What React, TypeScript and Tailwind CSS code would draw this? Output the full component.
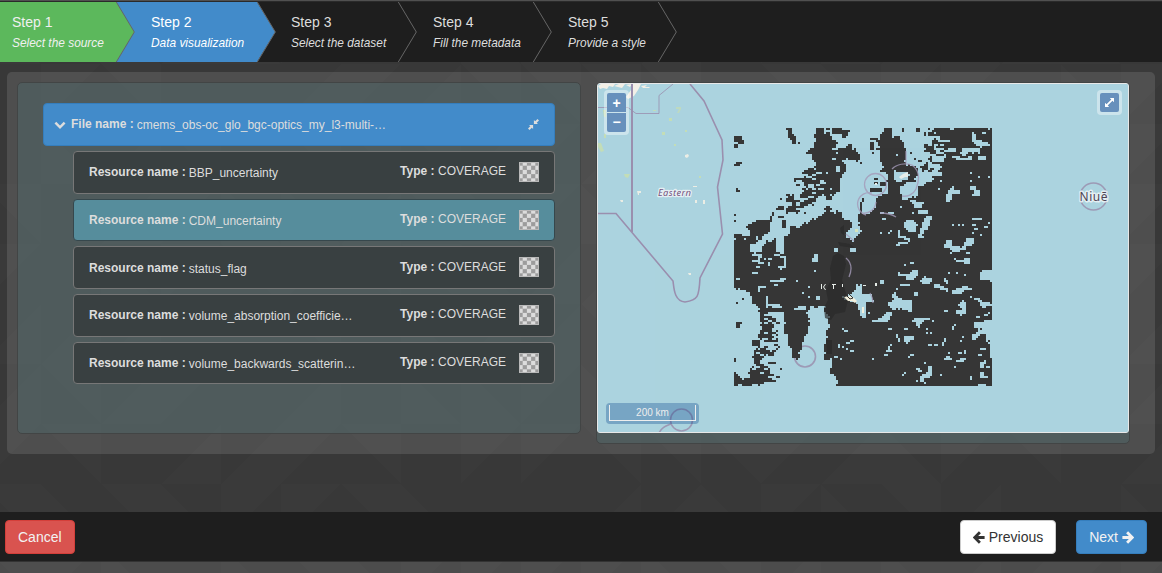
import React from "react";

/* ---------- raster layer ---------- */

type Op = { k: "d" | "l"; p: number[]; n?: number };
const D = (...p: number[]): Op => ({ k: "d", p });
const L = (...p: number[]): Op => ({ k: "l", p });
const box = (x: number, y: number, w: number, h: number) => [x, y, x + w, y, x + w, y + h, x, y + h];
const boxes = (k: "d" | "l", a: number[][]): Op[] => a.map((b) => ({ k, p: box(b[0], b[1], b[2], b[3]) }));
const noise = (k: "d" | "l", n: number, ...p: number[]): Op => ({ k, p, n });

const quadNW: Op[] = [
  D(171, 24, 189, 24, 189, 42, 195, 48, 201, 70, 189, 70, 189, 60, 177, 55, 177, 32, 171, 30),
  D(258, 24, 285, 24, 285, 42, 303, 48, 306, 60, 327, 62, 318, 74, 306, 92, 342, 82, 360, 72, 366, 84, 384, 98, 390, 110, 384, 124, 372, 118, 354, 114, 336, 122, 345, 136, 348, 160, 334, 162, 330, 180, 326, 212, 312, 222, 296, 222, 306, 234, 300, 240, 285, 228, 260, 228, 262, 252, 236, 256, 212, 262, 212, 278, 172, 278, 168, 262, 184, 256, 186, 246, 168, 246, 168, 222, 194, 222, 194, 240, 232, 240, 212, 232, 214, 210, 240, 206, 212, 196, 214, 180, 190, 182, 190, 174, 218, 174, 220, 156, 240, 144, 255, 146, 258, 132, 246, 118, 246, 108, 228, 98, 234, 90, 252, 82, 252, 42, 258, 40),
  D(309, 24, 335, 24, 335, 30, 360, 30, 356, 42, 348, 56, 335, 50, 335, 42, 309, 40),
  D(162, 348, 180, 342, 180, 324, 190, 318, 212, 324, 220, 312, 244, 300, 268, 290, 285, 276, 285, 264, 296, 254, 302, 254, 302, 276, 334, 276, 342, 300, 360, 300, 366, 318, 350, 336, 345, 350, 375, 366, 378, 348, 396, 336, 384, 318, 396, 300, 405, 300, 405, 405, 162, 405),
  D(398, 240, 406, 240, 406, 306, 384, 306, 384, 282, 392, 280, 390, 250),
  D(12, 342, 60, 348, 60, 336, 48, 318, 66, 308, 90, 300, 118, 300, 118, 336, 96, 348, 84, 360, 78, 372, 60, 372, 60, 398, 54, 406, 12, 406),
  D(104, 372, 132, 360, 138, 352, 138, 406, 92, 406, 96, 378),
  ...boxes("d", [[207, 66, 6, 6], [12, 48, 24, 20], [24, 60, 18, 12], [12, 70, 12, 12], [18, 126, 18, 6], [12, 130, 18, 8], [18, 204, 6, 6], [18, 208, 12, 8], [12, 282, 6, 6], [12, 300, 6, 6], [290, 24, 12, 6], [290, 36, 12, 8], [392, 126, 7, 6], [156, 300, 14, 24], [150, 234, 6, 6], [144, 260, 18, 8], [138, 264, 12, 6], [144, 288, 18, 6], [124, 276, 8, 14], [120, 288, 6, 18], [196, 190, 12, 8], [225, 276, 4, 6], [108, 360, 6, 8]]),
  ...boxes("l", [[318, 140, 12, 18], [270, 186, 16, 8], [264, 204, 18, 6], [270, 180, 12, 6], [258, 156, 18, 6], [230, 168, 14, 6], [248, 192, 6, 12], [246, 216, 10, 8], [298, 206, 6, 6], [240, 228, 10, 8], [316, 98, 6, 6], [290, 156, 6, 6], [80, 348, 20, 12], [312, 386, 10, 18], [360, 384, 20, 10], [372, 396, 24, 10], [330, 66, 12, 6], [306, 114, 14, 6], [42, 354, 6, 8], [12, 354, 6, 4]]),
  ...boxes("d", [[86, 350, 8, 8]]),
  noise("l", 0.12, 180, 160, 290, 160, 290, 275, 170, 275),
];

const quadNE: Op[] = [
  D(222, 24, 396, 24, 396, 406, -2, 406, -2, 282, 30, 282, 48, 264, 50, 234, 66, 225, 84, 222, 84, 192, 78, 162, 60, 150, 72, 138, 60, 120, 60, 90, 54, 66, 66, 42, 72, 36, 72, 24, 96, 24, 96, 54, 108, 48, 120, 58, 135, 72, 137, 90, 141, 108, 141, 120, 132, 126, 138, 134, 160, 134, 174, 150, 174, 168, 160, 184, 144, 190, 120, 204, 118, 216, 130, 240, 148, 234, 168, 228, 178, 222, 174, 204, 192, 190, 216, 186, 222, 168, 246, 162, 228, 150, 204, 156, 186, 150, 180, 138, 204, 126, 216, 108, 198, 96, 192, 78, 210, 66, 222, 54),
  ...boxes("d", [[33, 54, 24, 6], [33, 66, 12, 24], [48, 84, 12, 6], [39, 96, 6, 6], [166, 24, 14, 10], [124, 24, 10, 12], [192, 36, 6, 12], [204, 24, 6, 6], [204, 36, 18, 12], [153, 96, 6, 6], [165, 112, 6, 6], [177, 120, 10, 8], [3, 126, 6, 6], [40, 186, 14, 6], [32, 206, 32, 10], [60, 186, 20, 14], [40, 172, 12, 6], [0, 234, 12, 12]]),
  L(100, 158, 130, 156, 148, 160, 146, 176, 132, 180, 120, 186, 108, 184),
  L(120, 204, 144, 192, 166, 192, 162, 222, 148, 230, 132, 224, 118, 224),
  L(102, 150, 108, 150, 108, 182, 102, 184),
  L(240, 84, 288, 80, 288, 98, 258, 100, 254, 126, 236, 130, 246, 144, 234, 150, 216, 144, 204, 154, 204, 126, 216, 124, 216, 96, 240, 94),
  L(318, 82, 360, 84, 360, 100, 330, 96, 318, 106, 300, 104, 306, 86),
  L(338, 36, 350, 42, 350, 60, 380, 66, 390, 78, 360, 82, 336, 66),
  L(138, 300, 162, 300, 174, 312, 166, 336, 140, 332, 132, 318),
  L(192, 300, 204, 288, 216, 290, 210, 312, 204, 330, 192, 332, 186, 350, 174, 350, 180, 330),
  L(264, 216, 276, 198, 286, 198, 282, 210, 300, 210, 300, 222, 276, 222, 274, 240, 262, 252, 258, 234),
  L(330, 198, 350, 198, 350, 210, 362, 214, 362, 228, 338, 226, 342, 212, 330, 210),
  L(250, 376, 262, 360, 276, 362, 276, 378, 300, 378, 300, 396, 276, 396, 270, 386, 250, 384),
  L(318, 354, 342, 354, 344, 366, 336, 376, 318, 376, 318, 390, 300, 390, 312, 376),
  ...boxes("l", [[210, 48, 30, 6], [234, 60, 34, 6], [222, 72, 12, 16], [300, 112, 36, 6], [290, 106, 10, 12], [356, 108, 20, 10], [366, 36, 14, 6], [272, 24, 10, 6], [110, 102, 6, 6], [382, 168, 6, 8], [354, 168, 6, 6], [330, 154, 4, 8], [330, 180, 6, 4], [240, 180, 6, 6], [235, 204, 6, 6], [385, 24, 6, 6], [148, 240, 18, 8], [156, 246, 38, 6], [164, 250, 24, 14], [123, 258, 6, 6], [174, 270, 28, 10], [156, 276, 6, 6], [186, 270, 12, 12], [60, 276, 12, 6], [82, 276, 20, 6], [62, 336, 6, 6], [66, 292, 12, 6], [84, 338, 6, 4], [90, 330, 6, 6], [116, 330, 6, 24], [120, 348, 18, 6], [132, 354, 20, 6], [114, 366, 32, 6], [108, 372, 10, 6], [146, 360, 6, 6], [276, 312, 6, 6], [294, 312, 6, 6], [306, 312, 6, 6], [336, 294, 30, 6], [336, 312, 12, 6], [342, 324, 12, 6], [384, 306, 6, 6], [374, 318, 12, 6], [338, 336, 6, 6], [360, 342, 6, 6], [0, 312, 9, 12], [174, 348, 18, 6], [318, 354, 6, 24]]),
  noise("d", 0.18, 216, 80, 300, 80, 300, 150, 204, 150),
  noise("l", 0.08, 205, 50, 340, 50, 340, 120, 205, 120),
];

const quadSW: Op[] = [
  D(12, -2, 406, -2, 406, 98, 380, 98, 375, 120, 345, 132, 350, 144, 380, 150, 400, 186, 406, 200, 406, 405, 322, 405, 318, 372, 300, 366, 304, 328, 286, 330, 282, 280, 290, 262, 286, 240, 298, 225, 296, 192, 284, 182, 282, 165, 246, 165, 228, 180, 240, 200, 238, 220, 232, 240, 225, 255, 218, 280, 208, 296, 208, 320, 190, 324, 184, 290, 174, 282, 174, 258, 162, 240, 162, 180, 120, 180, 118, 192, 138, 200, 140, 210, 126, 214, 130, 240, 140, 240, 140, 252, 96, 262, 84, 300, 96, 318, 72, 330, 66, 318, 84, 300, 84, 262, 96, 225, 90, 190, 84, 165, 66, 150, 60, 126, 40, 115, 12, 108),
  D(84, 285, 120, 295, 100, 312, 96, 335, 120, 348, 126, 372, 132, 390, 108, 390, 84, 400, 12, 400, 12, 370, 24, 366, 30, 378, 60, 378, 60, 345, 80, 345, 66, 318),
  ...boxes("d", [[18, 148, 6, 6], [36, 140, 6, 6], [18, 208, 12, 18], [24, 208, 12, 6], [12, 320, 6, 10], [12, 358, 6, 6], [138, 372, 12, 6], [132, 276, 12, 8], [144, 282, 6, 6], [108, 264, 36, 6], [138, 210, 12, 6], [150, 348, 6, 6], [120, 300, 12, 12], [120, 366, 12, 6], [130, 386, 8, 6]]),
  ...boxes("l", [[65, 6, 12, 6], [82, 12, 8, 24], [66, 24, 18, 8], [90, 30, 12, 6], [78, 42, 12, 6], [90, 6, 6, 12], [132, 6, 18, 8], [150, 12, 20, 6], [160, 18, 6, 6], [102, 18, 6, 6], [112, 30, 6, 10], [66, 60, 20, 8], [144, 42, 22, 6], [150, 42, 8, 14], [120, 84, 44, 8], [150, 76, 20, 6], [82, 100, 24, 6], [82, 100, 8, 22], [132, 96, 12, 6], [160, 24, 6, 18], [18, 78, 14, 6], [108, 130, 6, 36], [112, 156, 36, 6], [126, 164, 30, 6], [150, 180, 12, 30], [246, 20, 18, 8], [254, 8, 12, 14], [252, 57, 6, 6], [216, 118, 6, 6], [234, 105, 6, 6], [196, 87, 6, 6], [260, 134, 10, 8], [234, 132, 6, 6], [206, 160, 20, 14], [194, 170, 12, 6], [336, 228, 6, 6], [342, 234, 12, 6], [360, 264, 12, 6], [348, 270, 10, 6], [348, 288, 6, 6], [360, 294, 12, 6], [324, 276, 6, 10], [336, 282, 6, 6], [314, 310, 8, 6], [330, 318, 6, 6], [396, 330, 10, 4], [378, 117, 12, 6], [300, 318, 6, 12]]),
  L(336, 132, 350, 138, 376, 126, 406, 124, 406, 198, 396, 196, 384, 168, 380, 150, 350, 146),
  noise("l", 0.24, 84, 170, 140, 180, 140, 285, 84, 310),
  noise("l", 0.2, 66, 300, 130, 300, 132, 380, 60, 380),
  noise("l", 0.12, 70, -2, 170, -2, 170, 45, 70, 45),
  noise("d", 0.18, 66, 250, 140, 240, 150, 350, 66, 350),
];

const quadSE: Op[] = [
  D(-2, -2, 396, -2, 396, 405, -2, 405),
  L(0, 124, 36, 124, 40, 150, 18, 150, 20, 196, 0, 200),
  L(96, 126, 108, 120, 114, 140, 156, 144, 158, 182, 144, 176, 120, 176, 114, 170, 100, 172, 84, 162, 88, 150, 102, 146),
  L(112, 62, 150, 66, 160, 54, 172, 52, 174, 70, 160, 84, 142, 86, 138, 74, 112, 68),
  L(180, 86, 196, 74, 216, 78, 218, 90, 204, 94, 190, 94),
  L(282, 18, 290, 24, 312, 24, 312, 16, 328, 20, 328, 38, 312, 38, 308, 30, 282, 26),
  L(358, 60, 386, 52, 398, 52, 398, 88, 362, 84),
  L(220, 100, 240, 96, 244, 104, 266, 108, 264, 120, 240, 110, 222, 110),
  L(274, 120, 290, 110, 312, 104, 336, 106, 336, 112, 314, 114, 300, 126, 286, 128, 276, 128),
  L(330, 134, 360, 138, 366, 148, 396, 154, 396, 160, 378, 160, 372, 172, 362, 164, 360, 150),
  L(306, 144, 316, 150, 318, 184, 306, 190, 288, 184, 288, 176, 304, 172, 294, 158),
  L(66, 196, 78, 182, 96, 182, 90, 198, 84, 210, 60, 208, 54, 196),
  L(160, 200, 180, 196, 202, 196, 216, 206, 192, 206, 180, 222, 174, 230, 168, 214, 158, 210),
  L(134, 250, 160, 250, 160, 262, 148, 266, 144, 276, 134, 272),
  L(346, 208, 398, 206, 398, 318, 388, 318, 390, 280, 378, 268, 378, 246, 354, 250, 350, 264, 334, 264, 334, 246, 350, 244, 354, 230, 338, 228),
  L(202, 346, 216, 342, 218, 364, 208, 380, 192, 380, 196, 396, 184, 390, 178, 372, 202, 360),
  ...boxes("l", [[153, 30, 12, 9], [135, 39, 6, 6], [268, 0, 6, 6], [318, 0, 12, 6], [264, 58, 8, 8], [255, 76, 6, 12], [260, 84, 6, 10], [288, 62, 6, 6], [312, 66, 6, 6], [60, 82, 12, 16], [118, 94, 30, 9], [110, 110, 6, 6], [162, 122, 12, 8], [252, 172, 14, 6], [348, 190, 10, 8], [372, 186, 12, 6], [382, 180, 6, 6], [26, 178, 6, 6], [38, 206, 20, 6], [84, 228, 12, 6], [130, 226, 12, 8], [108, 246, 8, 12], [116, 258, 6, 12], [196, 228, 6, 6], [196, 240, 6, 6], [210, 240, 6, 6], [216, 202, 6, 6], [204, 276, 12, 6], [222, 276, 14, 6], [248, 270, 6, 12], [255, 258, 6, 10], [274, 224, 10, 8], [280, 218, 8, 6], [300, 262, 6, 6], [306, 252, 6, 6], [90, 276, 6, 6], [84, 282, 6, 12], [78, 292, 16, 6], [72, 306, 10, 6], [38, 318, 6, 6], [142, 310, 10, 8], [148, 306, 12, 6], [260, 312, 12, 6], [254, 318, 22, 6], [264, 300, 6, 6], [290, 326, 22, 6], [300, 318, 16, 6], [296, 300, 10, 6], [310, 294, 6, 10], [282, 342, 6, 6], [242, 364, 6, 6], [192, 330, 6, 6], [168, 348, 12, 8], [172, 356, 12, 6], [128, 364, 6, 6], [166, 384, 8, 8], [210, 400, 14, 6], [360, 330, 12, 18], [372, 324, 6, 10], [360, 362, 12, 18], [370, 370, 16, 8], [330, 374, 6, 12], [352, 394, 28, 12], [378, 342, 12, 4], [360, 288, 16, 6], [354, 306, 14, 6], [132, 362, 6, 6]]),
  ...boxes("d", [[382, 400, 8, 5], [360, 226, 6, 8], [120, 170, 8, 10], [386, 262, 6, 6]]),
];

const quadrants: [number, number, Op[]][] = [
  [730, 120, quadNW],
  [860, 120, quadNE],
  [730, 252, quadSW],
  [860, 252, quadSE],
];

function inside(x: number, y: number, p: number[]) {
  let hit = false;
  for (let i = 0, j = p.length - 2; i < p.length; j = i, i += 2) {
    if (p[i + 1] > y !== p[j + 1] > y && x < ((p[j] - p[i]) * (y - p[i + 1])) / (p[j + 1] - p[i + 1]) + p[i]) hit = !hit;
  }
  return hit;
}

const rand = (x: number, y: number, s: number) => {
  let h = Math.imul(x + 101, 374761393) ^ Math.imul(y + 37, 668265263) ^ Math.imul(s + 11, 2147483629);
  h = Math.imul(h ^ (h >>> 13), 1274126177);
  h = Math.imul(h ^ (h >>> 15), 2246822519);
  return ((h ^ (h >>> 16)) >>> 0) / 4294967296;
};

function buildRaster() {
  let d = "";
  for (let y = 128; y < 387; y += 2) {
    let start = -1;
    for (let x = 734; x <= 992; x += 2) {
      let on = false;
      if (x < 992) {
        const [ox, oy, ops] = quadrants[(y >= 252 ? 2 : 0) + (x >= 862 ? 1 : 0)];
        const px = (x + 1 - ox) * 3;
        const py = (y + 1 - oy) * 3;
        const edge = y < 130 || y > 384 || x < 736 || x > 989;
        const jx = px + (edge ? 0 : (rand(x, y, 1) - 0.5) * 7);
        const jy = py + (edge ? 0 : (rand(x, y, 2) - 0.5) * 7);
        ops.forEach((o, i) => {
          if (o.n) {
            if (rand(x >> 2, y >> 1, i + 3) < o.n && inside(px, py, o.p)) on = o.k === "d";
          } else {
            const big = o.p.length > 30;
            if (inside(big ? jx : px, big ? jy : py, o.p)) on = o.k === "d";
          }
        });
      }
      if (on && start < 0) start = x;
      if (!on && start >= 0) {
        d += `M${start} ${y}H${x}V${Math.min(y + 2, 387)}H${start}Z`;
        start = -1;
      }
    }
  }
  return d;
}

const rasterPath = buildRaster();

function MapCanvas() {
  return (
    <svg className="block h-full w-full" viewBox="598 84 530 348" preserveAspectRatio="none">
      <rect x="598" y="84" width="530" height="348" fill="#abd3df" />
      <g fill="#f2efe6">
        <path d="M598 86l3-2h14l-2 3-4-1-2 3-4-1-3 1zM614 86l5-2h6l-3 4-4-1zM626 85l6-1-2 3zM633 84h8l-3 6-4 6-6 3-2-2 5-7zM641 86l6-1-2 2 5 0-1 1-6 0z" />
        <path d="M685 155l3-1 1 2-2 2-2-1zM637 191h4v2h-2v2h-1zM620 200h3v2h-2zM695 200h2v3h-2zM703 200h2v4h-2zM688 273h3v2h-2zM693 186h4v1h-4z" opacity=".9" />
      </g>
      <g fill="#c8dfb1" opacity=".85">
        <path d="M603 110h3v7h-2zM598 143h3l3 8-3 1-3-5zM604 134h2v4h-2zM662 132h3v3h-3zM669 118h3v3h-3zM624 174h6l-2 4-3-1zM674 144h2v2h-2zM685 130h2v2h-2zM699 176h2v2h-2zM653 110h3v1h-3z" />
        <path d="M676 107h5v2l-2 4h-2l2-4h-3z" opacity=".8" />
      </g>
      <g fill="none" stroke="#9a8fae" strokeWidth="1.6">
        <path d="M632 84V232" strokeWidth="2" />
        <path d="M598 213.500H616L673 281C674 288 674 301 685 302C698 300 699 297 700 278L722.500 234L717.500 187L723 160L722 140L704 101L690 84" />
        <path d="M598 107.500H628L636 113.500H659V95.500L673 84" strokeWidth="1" opacity=".8" />
        <g opacity=".85">
          <circle cx="1093.500" cy="196.500" r="13.500" />
          <circle cx="805" cy="356.500" r="10.500" />
          <circle cx="681.500" cy="420" r="11" />
          <path d="M659 433C662 427 666 426 671 424" />
        </g>
      </g>
      <path d={rasterPath} fill="#363636" shapeRendering="crispEdges" />
      <g fill="#2a2a2a" opacity=".7">
        <path d="M833 256l5-3 6 3 2 8-4 16 6 20-3 12-10 2-4 6-6-2-1-10 4-8-2-10 5-10-1-12zM840 228l4-3v10l-3-2zM838 242l12 2 5 4-15-2zM826 340h6v14h-5z" />
      </g>
      <g fill="none" stroke="#a49ab8" strokeWidth="1.300" opacity=".8">
        <circle cx="875.500" cy="184.500" r="11" />
        <path d="M892 169C897 164 905 163 912 165C919 170 920 179 916 189C913 195 907 197 902 196" />
        <path d="M866 215A11 11 0 1 1 872 193M862 213C869 214 875 210 876 202M880 213C886 213 893 215 896 217M906 151V163M846 258C852 263 852 270 849 277M846 234l8 7" />
        <path d="M870 293C873 298 873 300 873 303" />
      </g>
      <g fill="#e8eee9">
        <path d="M821 284h1v5h-1zM825 284h1l-2 3 2 3h-1l-2-3zM832 284h4v1h-2v4h-1v-4h-1zM842 284h1v3h-1zM863 285h3v1h-3zM875 283h2v3h-2zM903 174l5-2v5h-3l-4 2-2-2zM875 183h2v2h-2z" />
        <path d="M844 297l6-1 4 2 3 3-2 2-3-2-4 0-2-2zM862 307h2v6h-2z" fill="#f2efdc" />
        <path d="M855 229h3v3h-3z" fill="#d5e4bd" />
      </g>
      <path d="M847 296l3 3 3-1M849 294l4 4" stroke="#333" strokeWidth="1" fill="none" />
      <g stroke="#eef5f7" strokeOpacity=".85" paintOrder="stroke" strokeLinejoin="round">
        <text x="658" y="196" fontFamily="'Noto Sans', sans-serif" fontStyle="italic" fontSize="9.500" fill="#76547f" strokeWidth="2.500" textLength="33">Eastern</text>
        <text x="1079.500" y="201" fontFamily="'Noto Sans', sans-serif" fontSize="12" fill="#4f4553" strokeWidth="3" textLength="28">Niuē</text>
      </g>
    </svg>
  );
}

/* ---------- page pieces ---------- */

function Backdrop() {
  const tris: string[] = [];
  for (let r = 0; r < 11; r++) {
    for (let c = 0; c < 21; c++) {
      const x = -19 + c * 60;
      const y = -56 + r * 60;
      const t = Math.floor(rand(c, r, 9) * 5);
      if (t === 0) tris.push(`M${x} ${y}h60l-60 60z`);
      if (t === 1) tris.push(`M${x} ${y}h60v60z`);
      if (t === 2) tris.push(`M${x} ${y + 60}h60v-60z`);
      if (t === 3) tris.push(`M${x} ${y}v60h60z`);
    }
  }
  return (
    <svg className="absolute inset-0 h-full w-full" viewBox="0 0 1162 573">
      <path d={tris.join("")} fill="#ffffff" opacity=".012" />
    </svg>
  );
}

function Chevron({ left, right, line }: { left: string; right: string; line: string }) {
  return (
    <svg width="19" height="60" viewBox="0 0 19 60" className="shrink-0">
      <rect width="19" height="60" fill={right} />
      <path d="M0 0L18.300 30L0 60Z" fill={left} />
      <path d="M.3 0L18.300 30L.3 60" fill="none" stroke={line} strokeWidth="1" />
    </svg>
  );
}

function Step({ title, note, className }: { title: string; note: string; className: string }) {
  return (
    <div className={`h-[60px] shrink-0 whitespace-nowrap ${className}`}>
      <div className="pt-[10px] text-[14px] leading-5">{title}</div>
      <div className="mt-px text-[11.9px] italic leading-5">{note}</div>
    </div>
  );
}

function Checker() {
  const cells: React.ReactElement[] = [];
  for (let r = 0; r < 5; r++)
    for (let c = 0; c < 5; c++)
      if ((r + c) % 2 === 1)
        cells.push(<rect key={`${r}${c}`} x={-0.5 + c * 4.2} y={-0.5 + r * 4.2} width="4.200" height="4.200" />);
  return (
    <svg width="20" height="20" viewBox="0 0 20 20" className="mb-px ml-[13px] shrink-0">
      <rect width="20" height="20" fill="#9c9c9c" />
      <g fill="#dcdcdc">{cells}</g>
      <rect x=".5" y=".5" width="19" height="19" fill="none" stroke="#b9b9b9" />
    </svg>
  );
}

function Arrow({ flip, className }: { flip?: boolean; className: string }) {
  return (
    <svg width="12" height="13" viewBox="0 0 12 13" className={className}>
      <path
        d="M6.900 1.200L1.700 6.500L6.900 11.800M2 6.500H11.600"
        transform={flip ? "translate(12 0) scale(-1 1)" : undefined}
        fill="none"
        stroke="currentColor"
        strokeWidth="2.800"
      />
    </svg>
  );
}

const resources = [
  { name: "BBP_uncertainty" },
  { name: "CDM_uncertainty", active: true },
  { name: "status_flag" },
  { name: "volume_absorption_coefficie…" },
  { name: "volume_backwards_scatterin…" },
];

export default function App() {
  return (
    <div className="relative h-[573px] w-[1162px] overflow-hidden bg-[#383838] font-['Liberation_Sans',Arial,sans-serif] text-[12px] text-[#dddddd]">
      <Backdrop />
      <div className="relative flex h-full flex-col">
        <div className="h-px shrink-0 bg-[#505050]" />
        <div className="h-px shrink-0 bg-[#2a2a2a]" />
        <nav className="flex h-[60px] shrink-0 bg-[#1e1e1e]">
          <Step title="Step 1" note="Select the source" className="w-[116px] bg-[#5cb85c] pl-3 text-[#f0f0f0]" />
          <Chevron left="#5cb85c" right="#428bca" line="#666666" />
          <Step title="Step 2" note="Data visualization" className="w-[122px] bg-[#428bca] pl-4 text-white" />
          <Chevron left="#428bca" right="#1e1e1e" line="#666666" />
          <Step title="Step 3" note="Select the dataset" className="w-[122px] pl-[15px]" />
          <Chevron left="#1e1e1e" right="#1e1e1e" line="#666666" />
          <Step title="Step 4" note="Fill the metadata" className="w-[116px] pl-4" />
          <Chevron left="#1e1e1e" right="#1e1e1e" line="#666666" />
          <Step title="Step 5" note="Provide a style" className="w-[106px] pl-4" />
          <Chevron left="#1e1e1e" right="#1e1e1e" line="#666666" />
        </nav>

        <main className="mx-[7px] mt-[10px] flex h-[382px] shrink-0 items-start rounded-[5px] bg-white/[.115] px-[10px] pt-[10px]">
          <section className="h-[352px] w-[564px] rounded-[5px] border border-[#424545] bg-[rgba(83,121,125,.3)] px-[25px] pt-5">
            <div className="flex h-[43px] items-center rounded-[4px] border border-[#357ebd] bg-[#428bca] pl-[10px] pr-[15px]">
              <svg width="12" height="12" viewBox="0 0 12 12" className="shrink-0">
                <path d="M1.400 3.700L6 8.300L10.600 3.700" fill="none" stroke="currentColor" strokeWidth="2.500" />
              </svg>
              <span className="mb-px ml-[5px] font-bold">File name :</span>
              <span className="ml-[3px] mt-px">cmems_obs-oc_glo_bgc-optics_my_l3-multi-…</span>
              <svg width="11" height="11" viewBox="0 0 11 11" className="mb-px ml-auto shrink-0">
                <path
                  d="M5.900 5.100V1L7.200 2.300L9.500 0L11 1.500L8.700 3.800L10 5.100ZM5.100 5.900V10L3.800 8.700L1.500 11L0 9.500L2.300 7.200L1 5.900Z"
                  fill="currentColor"
                />
              </svg>
            </div>
            <div className="ml-[30px] mt-[5px] flex flex-col gap-[5px]">
              {resources.map((r) => (
                <div
                  key={r.name}
                  className={
                    r.active
                      ? "flex h-[42.700px] items-center rounded-[4px] border border-[#36474c] bg-[#568d9c] px-[15px]"
                      : "flex h-[42.700px] items-center rounded-[4px] border border-[#777777] bg-[#394041] px-[15px]"
                  }
                >
                  <span className="font-bold">Resource name :</span>
                  <span className="ml-[3px] mt-0.5">{r.name}</span>
                  <span className="mb-0.5 ml-auto font-bold">Type :</span>
                  <span className="mb-0.5 ml-[3.500px]">COVERAGE</span>
                  <Checker />
                </div>
              ))}
            </div>
          </section>

          <section className="ml-[15px] h-[362px] w-[534px] rounded-[5px] border border-[#424545] bg-[rgba(83,121,125,.3)]">
            <div className="relative h-[350px] w-[532px] overflow-hidden rounded-[3px] border border-[#e8e8e8] bg-[#abd3df]">
              <MapCanvas />
              <div className="absolute left-[6px] top-[6px] flex flex-col gap-px rounded-[4px] bg-white/40 p-[3px] text-white">
                <button className="flex h-[19px] w-[19px] items-center justify-center rounded-t-[2px] bg-[#6790bc] text-[14px] font-bold leading-none">+</button>
                <button className="flex h-[19px] w-[19px] items-center justify-center rounded-b-[2px] bg-[#6790bc] pb-px text-[14px] font-bold leading-none">−</button>
              </div>
              <div className="absolute right-[6px] top-[6px] rounded-[4px] bg-white/40 p-[3px] text-white">
                <button className="flex h-[19px] w-[19px] items-center justify-center rounded-[2px] bg-[#6790bc]">
                  <svg width="9" height="9" viewBox="0 0 9 9" className="mb-px">
                    <path d="M4.800 0H9V4.200L7.500 2.700L2.700 7.500L4.200 9H0V4.800L1.500 6.300L6.300 1.500Z" fill="currentColor" />
                  </svg>
                </button>
              </div>
              <div className="absolute bottom-2 left-2 rounded-[4px] bg-[rgba(0,60,136,.3)] p-[2px]">
                <div className="mx-px mb-px h-[16px] w-[87px] border border-t-0 border-[#eeeeee] text-center text-[10px] leading-4 text-[#eeeeee]">200 km</div>
              </div>
            </div>
          </section>
        </main>

        <div className="flex-1" />

        <footer className="flex h-[50px] shrink-0 items-center border-b border-[#333333] bg-[#1e1e1e] pl-[5px] pr-[15px] text-[14px]">
          <button className="h-[34px] rounded-[4px] border border-[#d43f3a] bg-[#d9534f] px-3 pt-px text-[#f2f2f2]">Cancel</button>
          <button className="ml-auto flex h-[34px] items-center rounded-[4px] border border-[#cccccc] bg-white px-3 pt-px text-[#333333]">
            <Arrow className="mr-1" />
            Previous
          </button>
          <button className="ml-5 flex h-[34px] items-center rounded-[4px] border border-[#357ebd] bg-[#428bca] px-3 pt-px text-[#f2f2f2]">
            Next
            <Arrow flip className="ml-1" />
          </button>
        </footer>
        <div className="h-[11px] shrink-0 bg-white/10" />
      </div>
    </div>
  );
}
